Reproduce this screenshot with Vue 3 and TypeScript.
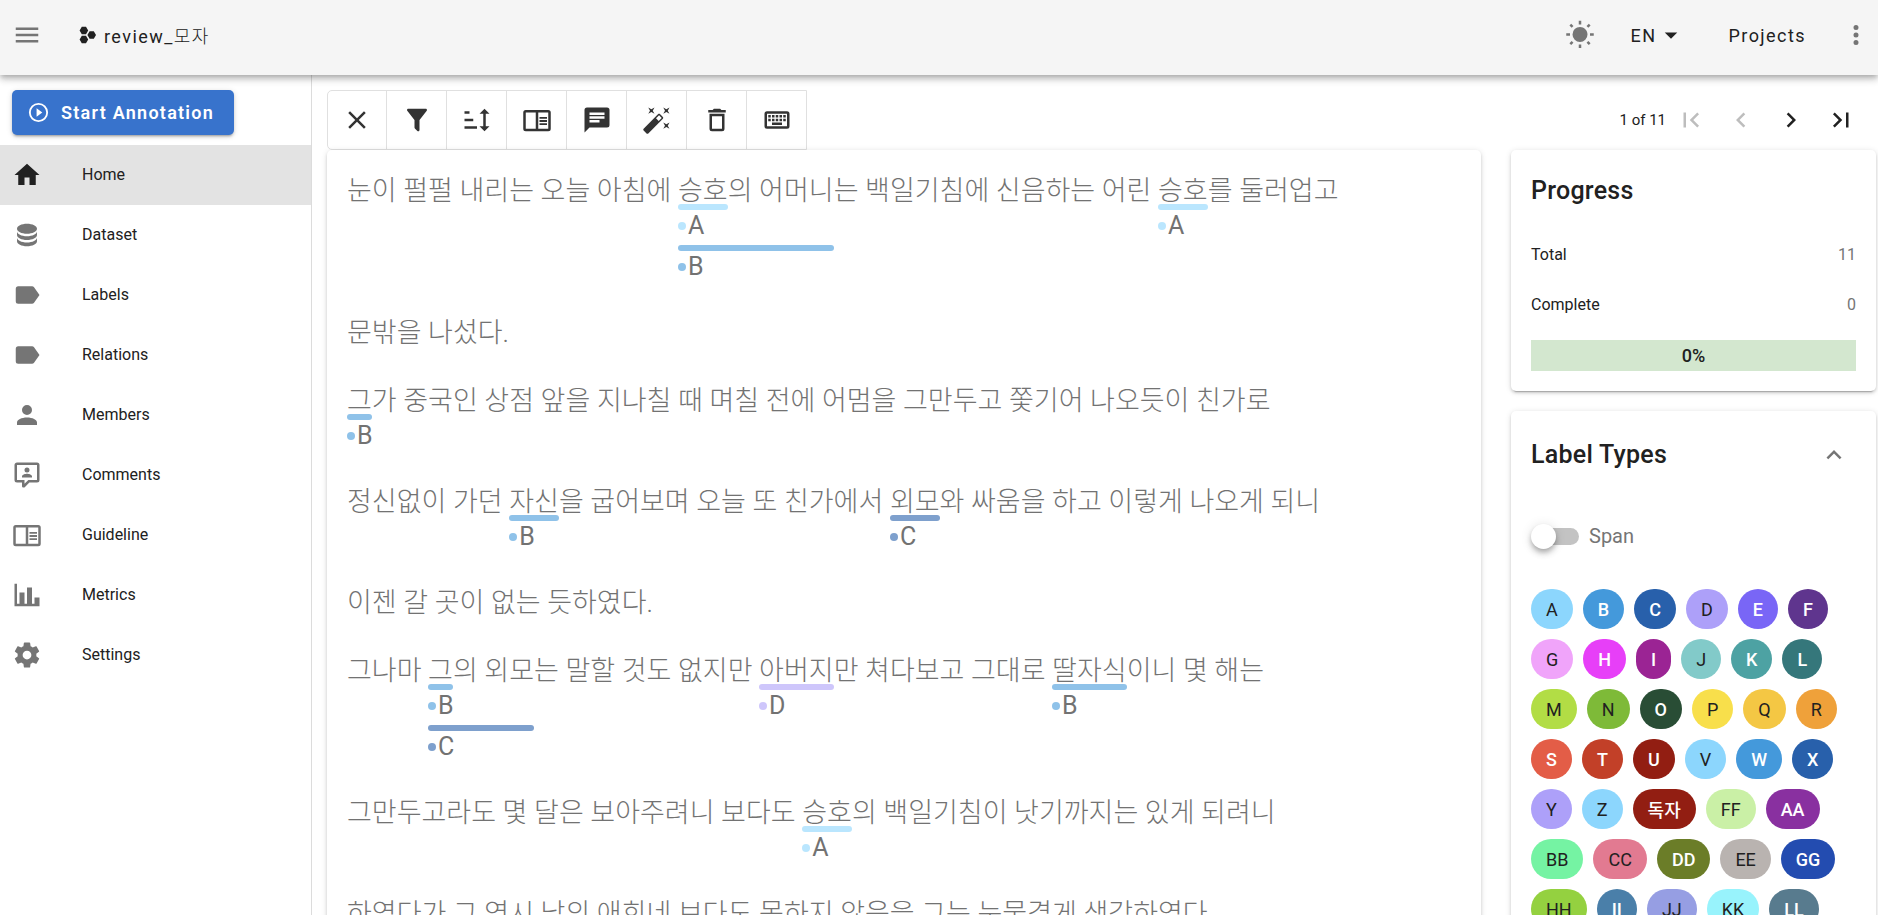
<script setup lang="ts">
import { ref } from 'vue'

interface Segment {
  text: string
  label?: string
  inner?: { text: string; label: string }
}

const icons = {
  menu: 'M3,6H21V8H3V6M3,11H21V13H3V11M3,16H21V18H3V16Z',
  home: 'M10,20V14H14V20H19V12H22L12,3L2,12H5V20H10Z',
  database:
    'M12,3C7.58,3 4,4.79 4,7C4,9.21 7.58,11 12,11C16.42,11 20,9.21 20,7C20,4.79 16.42,3 12,3M4,9V12C4,14.21 7.58,16 12,16C16.42,16 20,14.21 20,12V9C20,11.21 16.42,13 12,13C7.58,13 4,11.21 4,9M4,14V17C4,19.21 7.58,21 12,21C16.42,21 20,19.21 20,17V14C20,16.21 16.42,18 12,18C7.58,18 4,16.21 4,14Z',
  label:
    'M17.63,5.84C17.27,5.33 16.67,5 16,5H5A2,2 0 0,0 3,7V17A2,2 0 0,0 5,19H16C16.67,19 17.27,18.66 17.63,18.15L22,12L17.63,5.84Z',
  account:
    'M12,4A4,4 0 0,1 16,8A4,4 0 0,1 12,12A4,4 0 0,1 8,8A4,4 0 0,1 12,4M12,14C16.42,14 20,15.79 20,18V20H4V18C4,15.79 7.58,14 12,14Z',
  comment:
    'M9,22A1,1 0 0,1 8,21V18H4A2,2 0 0,1 2,16V4C2,2.89 2.9,2 4,2H20A2,2 0 0,1 22,4V16A2,2 0 0,1 20,18H13.9L10.2,21.71C10,21.9 9.75,22 9.5,22V22H9M10,16V19.08L13.08,16H20V4H4V16H10M16,14H8V13C8,11.67 10.67,11 12,11C13.33,11 16,11.67 16,13V14M12,6A2,2 0 0,1 14,8A2,2 0 0,1 12,10A2,2 0 0,1 10,8A2,2 0 0,1 12,6Z',
  book: 'M21,4H3A2,2 0 0,0 1,6V19A2,2 0 0,0 3,21H21A2,2 0 0,0 23,19V6A2,2 0 0,0 21,4M3,19V6H11V19H3M21,19H13V6H21V19M14,9.5H20V11H14V9.5M14,12H20V13.5H14V12M14,14.5H20V16H14V14.5Z',
  chart: 'M22,21H2V3H4V19H6V10H10V19H12V6H16V19H18V14H22V21Z',
  cog: 'M12,15.5A3.5,3.5 0 0,1 8.5,12A3.5,3.5 0 0,1 12,8.5A3.5,3.5 0 0,1 15.5,12A3.5,3.5 0 0,1 12,15.5M19.43,12.97C19.47,12.65 19.5,12.33 19.5,12C19.5,11.67 19.47,11.34 19.43,11L21.54,9.37C21.73,9.22 21.78,8.95 21.66,8.73L19.66,5.27C19.54,5.05 19.27,4.96 19.05,5.05L16.56,6.05C16.04,5.66 15.5,5.32 14.87,5.07L14.5,2.42C14.46,2.18 14.25,2 14,2H10C9.75,2 9.54,2.18 9.5,2.42L9.13,5.07C8.5,5.32 7.96,5.66 7.44,6.05L4.95,5.05C4.73,4.96 4.46,5.05 4.34,5.27L2.34,8.73C2.21,8.95 2.27,9.22 2.46,9.37L4.57,11C4.53,11.34 4.5,11.67 4.5,12C4.5,12.33 4.53,12.65 4.57,12.97L2.46,14.63C2.27,14.78 2.21,15.05 2.34,15.27L4.34,18.73C4.46,18.95 4.73,19.03 4.95,18.95L7.44,17.94C7.96,18.34 8.5,18.68 9.13,18.93L9.5,21.58C9.54,21.82 9.75,22 10,22H14C14.25,22 14.46,21.82 14.5,21.58L14.87,18.93C15.5,18.67 16.04,18.34 16.56,17.94L19.05,18.95C19.27,19.03 19.54,18.95 19.66,18.73L21.66,15.27C21.78,15.05 21.73,14.78 21.54,14.63L19.43,12.97Z',
  play: 'M12,20C7.59,20 4,16.41 4,12C4,7.59 7.59,4 12,4C16.41,4 20,7.59 20,12C20,16.41 16.41,20 12,20M12,2A10,10 0 0,0 2,12A10,10 0 0,0 12,22A10,10 0 0,0 22,12A10,10 0 0,0 12,2M10,16.5L16,12L10,7.5V16.5Z',
  close:
    'M19,6.41L17.59,5L12,10.59L6.41,5L5,6.41L10.59,12L5,17.59L6.41,19L12,13.41L17.59,19L19,17.59L13.41,12L19,6.41Z',
  filter:
    'M14,12V19.88C14.04,20.18 13.94,20.5 13.71,20.71C13.32,21.1 12.69,21.1 12.3,20.71L10.29,18.7C10.06,18.47 9.96,18.16 10,17.87V12H9.97L4.21,4.62C3.87,4.19 3.95,3.56 4.38,3.22C4.57,3.08 4.78,3 5,3V3H19V3C19.22,3 19.43,3.08 19.62,3.22C20.05,3.56 20.13,4.19 19.79,4.62L14.03,12H14Z',
  sort: 'M18 21L14 17H17V7H14L18 3L22 7H19V17H22M2 19V17H12V19M2 13V11H9V13M2 7V5H6V7H2Z',
  message:
    'M20 2H4A2 2 0 0 0 2 4V22L6 18H20A2 2 0 0 0 22 16V4A2 2 0 0 0 20 2M6 9H18V11H6M14 14H6V12H14M18 8H6V6H18',
  wand: 'M7.5,5.6L5,7L6.4,4.5L5,2L7.5,3.4L10,2L8.6,4.5L10,7L7.5,5.6M19.5,15.4L22,14L20.6,16.5L22,19L19.5,17.6L17,19L18.4,16.5L17,14L19.5,15.4M22,2L20.6,4.5L22,7L19.5,5.6L17,7L18.4,4.5L17,2L19.5,3.4L22,2M13.34,12.78L15.78,10.34L13.66,8.22L11.22,10.66L13.34,12.78M14.37,7.29L16.71,9.63C17.1,10 17.1,10.65 16.71,11.04L5.04,22.71C4.65,23.1 4,23.1 3.63,22.71L1.29,20.37C0.9,20 0.9,19.35 1.29,18.96L12.96,7.29C13.35,6.9 14,6.9 14.37,7.29Z',
  trash:
    'M6,19A2,2 0 0,0 8,21H16A2,2 0 0,0 18,19V7H6V19M8,9H16V19H8V9M15.5,4L14.5,3H9.5L8.5,4H5V6H19V4H15.5Z',
  keyboard:
    'M4,5A2,2 0 0,0 2,7V17A2,2 0 0,0 4,19H20A2,2 0 0,0 22,17V7A2,2 0 0,0 20,5H4M4,7H20V17H4V7M5,8V10H7V8H5M8,8V10H10V8H8M11,8V10H13V8H11M14,8V10H16V8H14M17,8V10H19V8H17M5,11V13H7V11H5M8,11V13H10V11H8M11,11V13H13V11H11M14,11V13H16V11H14M17,11V13H19V11H17M8,14V16H16V14H8Z',
  sun: 'M3.55,18.54L4.96,19.95L6.76,18.16L5.34,16.74M11,22.45C11.32,22.45 13,22.45 13,22.45V19.5H11M12,5.5A6,6 0 0,0 6,11.5A6,6 0 0,0 12,17.5A6,6 0 0,0 18,11.5C18,8.18 15.31,5.5 12,5.5M20,12.5H23V10.5H20M17.24,18.16L19.04,19.95L20.45,18.54L18.66,16.74M20.45,4.46L19.04,3.05L17.24,4.84L18.66,6.26M13,0.55H11V3.5H13M4,10.5H1V12.5H4M6.76,4.84L4.96,3.05L3.55,4.46L5.34,6.26L6.76,4.84Z',
  down: 'M7,10L12,15L17,10H7Z',
  dots: 'M12,16A2,2 0 0,1 14,18A2,2 0 0,1 12,20A2,2 0 0,1 10,18A2,2 0 0,1 12,16M12,10A2,2 0 0,1 14,12A2,2 0 0,1 12,14A2,2 0 0,1 10,12A2,2 0 0,1 12,10M12,4A2,2 0 0,1 14,6A2,2 0 0,1 12,8A2,2 0 0,1 10,6A2,2 0 0,1 12,4Z',
  first: 'M18.41,16.59L13.82,12L18.41,7.41L17,6L11,12L17,18L18.41,16.59M6,6H8V18H6V6Z',
  prev: 'M15.41,16.58L10.83,12L15.41,7.41L14,6L8,12L14,18L15.41,16.58Z',
  next: 'M8.59,16.58L13.17,12L8.59,7.41L10,6L16,12L10,18L8.59,16.58Z',
  last: 'M5.59,7.41L10.18,12L5.59,16.59L7,18L13,12L7,6L5.59,7.41M16,6H18V18H16V6Z',
  up: 'M7.41,15.41L12,10.83L16.59,15.41L18,14L12,8L6,14L7.41,15.41Z',
}

const nav = [
  { title: 'Home', icon: icons.home },
  { title: 'Dataset', icon: icons.database },
  { title: 'Labels', icon: icons.label },
  { title: 'Relations', icon: icons.label },
  { title: 'Members', icon: icons.account },
  { title: 'Comments', icon: icons.comment },
  { title: 'Guideline', icon: icons.book },
  { title: 'Metrics', icon: icons.chart },
  { title: 'Settings', icon: icons.cog },
]

const tools = [
  { title: 'Mark as complete', icon: icons.close },
  { title: 'Filter', icon: icons.filter },
  { title: 'Sort', icon: icons.sort },
  { title: 'Guideline', icon: icons.book },
  { title: 'Comments', icon: icons.message },
  { title: 'Auto labeling', icon: icons.wand },
  { title: 'Clear labels', icon: icons.trash },
  { title: 'Shortcuts', icon: icons.keyboard },
]

const pager = [
  { title: 'First page', icon: icons.first, disabled: true },
  { title: 'Previous page', icon: icons.prev, disabled: true },
  { title: 'Next page', icon: icons.next, disabled: false },
  { title: 'Last page', icon: icons.last, disabled: false },
]

const lines: Segment[][] = [
  [
    { text: '눈이 펄펄 내리는 오늘 아침에 ' },
    { text: '의 어머니', label: 'B', inner: { text: '승호', label: 'A' } },
    { text: '는 백일기침에 신음하는 어린 ' },
    { text: '승호', label: 'A' },
    { text: '를 둘러업고' },
  ],
  [{ text: '문밖을 나섰다.' }],
  [
    { text: '그', label: 'B' },
    { text: '가 중국인 상점 앞을 지나칠 때 며칠 전에 어멈을 그만두고 쫓기어 나오듯이 친가로' },
  ],
  [
    { text: '정신없이 가던 ' },
    { text: '자신', label: 'B' },
    { text: '을 굽어보며 오늘 또 친가에서 ' },
    { text: '외모', label: 'C' },
    { text: '와 싸움을 하고 이렇게 나오게 되니' },
  ],
  [{ text: '이젠 갈 곳이 없는 듯하였다.' }],
  [
    { text: '그나마 ' },
    { text: '의 외모', label: 'C', inner: { text: '그', label: 'B' } },
    { text: '는 말할 것도 없지만 ' },
    { text: '아버지', label: 'D' },
    { text: '만 쳐다보고 그대로 ' },
    { text: '딸자식', label: 'B' },
    { text: '이니 몇 해는' },
  ],
  [
    { text: '그만두고라도 몇 달은 보아주려니 보다도 ' },
    { text: '승호', label: 'A' },
    { text: '의 백일기침이 낫기까지는 있게 되려니' },
  ],
  [{ text: '하였다가 그 역시 남의 애희네 보다도 못하지 않음을 그는 눈물겹게 생각하였다.' }],
]

const labelTypes = [
  { text: 'A', color: '#8cd6fd' },
  { text: 'B', color: '#4499db', light: true },
  { text: 'C', color: '#2860ab', light: true },
  { text: 'D', color: '#ada0f9' },
  { text: 'E', color: '#7966f6', light: true },
  { text: 'F', color: '#5f358e', light: true },
  { text: 'G', color: '#f0a4fa' },
  { text: 'H', color: '#e73ff8', light: true },
  { text: 'I', color: '#9b2494', light: true },
  { text: 'J', color: '#82cac9' },
  { text: 'K', color: '#4da2a3', light: true },
  { text: 'L', color: '#35777b', light: true },
  { text: 'M', color: '#b2dd45' },
  { text: 'N', color: '#7eba38' },
  { text: 'O', color: '#294d35', light: true },
  { text: 'P', color: '#f8df4b' },
  { text: 'Q', color: '#f4c744' },
  { text: 'R', color: '#efa13a' },
  { text: 'S', color: '#e35d47', light: true },
  { text: 'T', color: '#c24028', light: true },
  { text: 'U', color: '#921e12', light: true },
  { text: 'V', color: '#8cd6fd' },
  { text: 'W', color: '#4499db', light: true },
  { text: 'X', color: '#2860ab', light: true },
  { text: 'Y', color: '#ada0f9' },
  { text: 'Z', color: '#8cd6fd' },
  { text: '독자', color: '#921e12', light: true },
  { text: 'FF', color: '#caf0a6' },
  { text: 'AA', color: '#8930a0', light: true },
  { text: 'BB', color: '#75f3a3' },
  { text: 'CC', color: '#e27a91' },
  { text: 'DD', color: '#6b7d28', light: true },
  { text: 'EE', color: '#b9b3b0' },
  { text: 'GG', color: '#234cb0', light: true },
  { text: 'HH', color: '#94d140' },
  { text: 'II', color: '#4a7fa9', light: true },
  { text: 'JJ', color: '#969ee3' },
  { text: 'KK', color: '#98f3fc' },
  { text: 'LL', color: '#587b8e', light: true },
]

const colorOf = (label: string) => labelTypes.find((l) => l.text === label)?.color
const spanMode = ref(false)
</script>

<template>
  <div class="app">
    <header class="bar">
      <button class="plain" type="button" aria-label="Menu">
        <svg class="icon muted" viewBox="0 0 24 24"><path :d="icons.menu" /></svg>
      </button>
      <a class="brand" href="#">
        <svg class="hex" viewBox="0 0 20 20">
          <path
            d="M1.6 5.5L3.8 1.7H8L10.2 5.5L8 9.3H3.8ZM1.6 14.5L3.8 10.7H8L10.2 14.5L8 18.3H3.8ZM9.4 10L11.6 6.2H15.8L18 10L15.8 13.8H11.6Z"
          />
        </svg>
        <span>review_<span class="thin">모자</span></span>
      </a>
      <div class="actions">
        <button class="plain" type="button" aria-label="Toggle theme">
          <svg class="icon muted" viewBox="0 0 24 24"><path :d="icons.sun" /></svg>
        </button>
        <button class="plain lang" type="button">
          EN
          <svg class="icon" viewBox="0 0 24 24"><path :d="icons.down" /></svg>
        </button>
        <a class="projects" href="#">Projects</a>
        <button class="plain" type="button" aria-label="More">
          <svg class="icon muted" viewBox="0 0 24 24"><path :d="icons.dots" /></svg>
        </button>
      </div>
    </header>

    <div class="body">
      <nav class="side">
        <button class="start" type="button">
          <svg viewBox="0 0 24 24"><path :d="icons.play" /></svg>
          Start Annotation
        </button>
        <a v-for="(item, i) in nav" :key="item.title" href="#" class="item" :class="{ active: i === 0 }">
          <svg class="icon" viewBox="0 0 24 24"><path :d="item.icon" /></svg>
          <span>{{ item.title }}</span>
        </a>
      </nav>

      <main class="main">
        <div class="top">
          <div class="tools">
            <button v-for="tool in tools" :key="tool.title" type="button" :aria-label="tool.title">
              <svg class="icon" viewBox="0 0 24 24"><path :d="tool.icon" /></svg>
            </button>
          </div>
          <div class="pager">
            <span>1 of 11</span>
            <button
              v-for="page in pager"
              :key="page.title"
              type="button"
              :disabled="page.disabled"
              :aria-label="page.title"
            >
              <svg class="icon" viewBox="0 0 24 24"><path :d="page.icon" /></svg>
            </button>
          </div>
        </div>

        <div class="columns">
          <article class="card doc">
            <p v-for="(line, i) in lines" :key="i" class="line">
              <template v-for="(seg, j) in line" :key="j"
                ><span v-if="seg.label" class="mark"
                  ><span v-if="seg.inner" class="mark"
                    >{{ seg.inner.text
                    }}<span class="stroke" :style="{ background: colorOf(seg.inner.label) }"></span
                    ><span class="tag"
                      ><i :style="{ background: colorOf(seg.inner.label) }"></i>{{ seg.inner.label }}</span
                    ></span
                  >{{ seg.text
                  }}<span class="stroke" :style="{ background: colorOf(seg.label) }"></span
                  ><span class="tag"
                    ><i :style="{ background: colorOf(seg.label) }"></i>{{ seg.label }}</span
                  ></span
                ><template v-else>{{ seg.text }}</template></template
              >
            </p>
          </article>

          <aside class="panels">
            <section class="card progress">
              <h2>Progress</h2>
              <dl>
                <div><dt>Total</dt><dd>11</dd></div>
                <div><dt>Complete</dt><dd>0</dd></div>
              </dl>
              <div class="meter" role="progressbar" aria-valuenow="0">0%</div>
            </section>

            <section class="card types">
              <div class="heading">
                <h2>Label Types</h2>
                <button class="plain" type="button" aria-label="Collapse">
                  <svg class="icon muted" viewBox="0 0 24 24"><path :d="icons.up" /></svg>
                </button>
              </div>
              <label class="switch">
                <input v-model="spanMode" type="checkbox" />
                Span
              </label>
              <div class="chips">
                <button
                  v-for="type in labelTypes"
                  :key="type.text"
                  type="button"
                  :class="{ light: type.light }"
                  :style="{ background: type.color }"
                >
                  {{ type.text }}
                </button>
              </div>
            </section>
          </aside>
        </div>
      </main>
    </div>
  </div>
</template>

<style>
body {
  margin: 0;
  background: #fff;
}
</style>

<style scoped>
.app {
  display: flex;
  flex-direction: column;
  height: 100vh;
  overflow: hidden;
  color: #212121;
  font-family: Roboto, 'Noto Sans CJK KR', sans-serif;
  font-size: 16px;
}

button {
  margin: 0;
  padding: 0;
  border: 0;
  background: none;
  color: inherit;
  font: inherit;
  cursor: pointer;
}

a {
  color: inherit;
  text-decoration: none;
}

svg {
  display: block;
  fill: currentColor;
}

.icon {
  flex: none;
  width: 30px;
  height: 30px;
}

.muted {
  color: #757575;
}

.bar {
  position: relative;
  z-index: 1;
  display: flex;
  align-items: center;
  flex: none;
  height: 70px;
  padding: 0 7px 5px 12px;
  background: #f5f5f5;
  box-shadow:
    0 2px 5px -1px rgba(0, 0, 0, 0.2),
    0 5px 6px rgba(0, 0, 0, 0.14),
    0 1px 12px rgba(0, 0, 0, 0.12);
}

.brand {
  display: flex;
  align-items: center;
  gap: 6px;
  margin-left: 36px;
}

.thin {
  font-weight: 300;
}

.hex {
  width: 20px;
  height: 20px;
}

.brand,
.lang,
.projects {
  font-size: 18px;
  letter-spacing: 0.08em;
}

.actions {
  display: flex;
  align-items: center;
  margin-left: auto;
}

.lang {
  display: flex;
  align-items: center;
  margin: 0 42px 0 36px;
}

.projects {
  margin-right: 35px;
}

.body {
  display: flex;
  flex: 1;
  min-height: 0;
}

.side {
  flex: none;
  width: 311px;
  border-right: 1px solid #dcdcdc;
}

.start {
  display: flex;
  align-items: center;
  gap: 11px;
  height: 45px;
  margin: 15px 12px 10px;
  padding: 0 20px 0 15px;
  border-radius: 5px;
  background: #3873cc;
  box-shadow:
    0 3px 2px -2px rgba(0, 0, 0, 0.2),
    0 2px 3px rgba(0, 0, 0, 0.14),
    0 1px 6px rgba(0, 0, 0, 0.12);
  color: #fff;
  font-size: 18px;
  font-weight: 600;
  letter-spacing: 0.07em;
}

.start svg {
  width: 23px;
  height: 23px;
}

.item {
  display: flex;
  align-items: center;
  gap: 40px;
  height: 60px;
  padding: 0 12px;
}

.item span {
  padding-bottom: 2px;
}

.item .icon {
  color: #757575;
}

.item.active {
  background: #e3e3e3;
}

.item.active .icon {
  color: #212121;
}

.main {
  flex: 1;
  min-width: 0;
  padding: 15px 2px 0 15px;
}

.top {
  display: flex;
  justify-content: space-between;
  padding-right: 10px;
}

.tools {
  display: flex;
  border: 1px solid #e0e0e0;
  border-radius: 5px 0 0 5px;
}

.tools button {
  display: grid;
  place-items: center;
  width: 58px;
  height: 58px;
  color: #333;
}

.tools button + button {
  width: 60px;
  border-left: 1px solid #e0e0e0;
}

.pager {
  display: flex;
  align-items: center;
}

.pager span {
  font-size: 15px;
}

.pager button {
  display: grid;
  place-items: center;
  width: 50px;
  height: 50px;
}

.pager button:disabled {
  color: #bdbdbd;
}

.columns {
  display: grid;
  grid-template-columns: minmax(0, 1fr) 365px;
  gap: 30px;
}

.card {
  border-radius: 5px;
  background: #fff;
  box-shadow:
    0 4px 1px -3px rgba(0, 0, 0, 0.2),
    0 2px 3px rgba(0, 0, 0, 0.14),
    0 1px 6px rgba(0, 0, 0, 0.12);
}

.doc {
  padding: 29px 20px;
}

.line {
  min-height: 33px;
  margin: 0 0 35px;
  color: #727272;
  font-size: 27px;
  font-weight: 300;
  line-height: 25px;
}

.mark {
  display: inline-block;
  vertical-align: top;
}

.stroke {
  display: block;
  height: 6px;
  border-radius: 3px;
  opacity: 0.6;
}

.tag {
  display: flex;
  align-items: center;
  gap: 2px;
  width: 0;
  height: 31px;
  margin-bottom: 4px;
  font-size: 25px;
  font-weight: 400;
}

.tag i {
  flex: none;
  width: 8px;
  height: 8px;
  border-radius: 50%;
  opacity: 0.6;
}

.panels {
  display: flex;
  flex-direction: column;
  gap: 20px;
}

.progress {
  padding: 21px 20px 20px;
}

h2 {
  margin: 0;
  font-size: 25px;
  font-weight: 500;
  letter-spacing: 0.01em;
  line-height: 40px;
}

dl {
  margin: 18px 0 11px;
}

dl div {
  display: flex;
  align-items: center;
  justify-content: space-between;
  height: 50px;
}

dd {
  margin: 0;
  color: #757575;
}

.meter {
  height: 31px;
  background: #d3e7cf;
  font-size: 18px;
  font-weight: 500;
  line-height: 31px;
  text-align: center;
}

.types {
  padding: 24px 20px 20px;
}

.heading {
  display: flex;
  align-items: center;
  justify-content: space-between;
  padding-right: 7px;
}

.switch {
  display: flex;
  align-items: center;
  gap: 10px;
  height: 24px;
  margin: 49px 0 41px;
  color: #757575;
  font-size: 20px;
}

.switch input {
  display: flex;
  align-items: center;
  width: 48px;
  height: 17px;
  margin: 0;
  border-radius: 9px;
  appearance: none;
  background: linear-gradient(#c3c3c3, #c3c3c3) no-repeat right / 44px 17px;
}

.switch input::before {
  width: 25px;
  height: 25px;
  border-radius: 50%;
  background: #fff;
  box-shadow:
    0 3px 5px -1px rgba(0, 0, 0, 0.2),
    0 5px 6px rgba(0, 0, 0, 0.14),
    0 1px 12px rgba(0, 0, 0, 0.12);
  content: '';
}

.switch input:checked {
  justify-content: flex-end;
}

.chips {
  display: flex;
  flex-wrap: wrap;
  gap: 10px;
}

.chips button {
  height: 40px;
  padding: 0 15px;
  border-radius: 20px;
  font-size: 18px;
}

.chips .light {
  color: #fff;
  font-weight: 500;
}
</style>
